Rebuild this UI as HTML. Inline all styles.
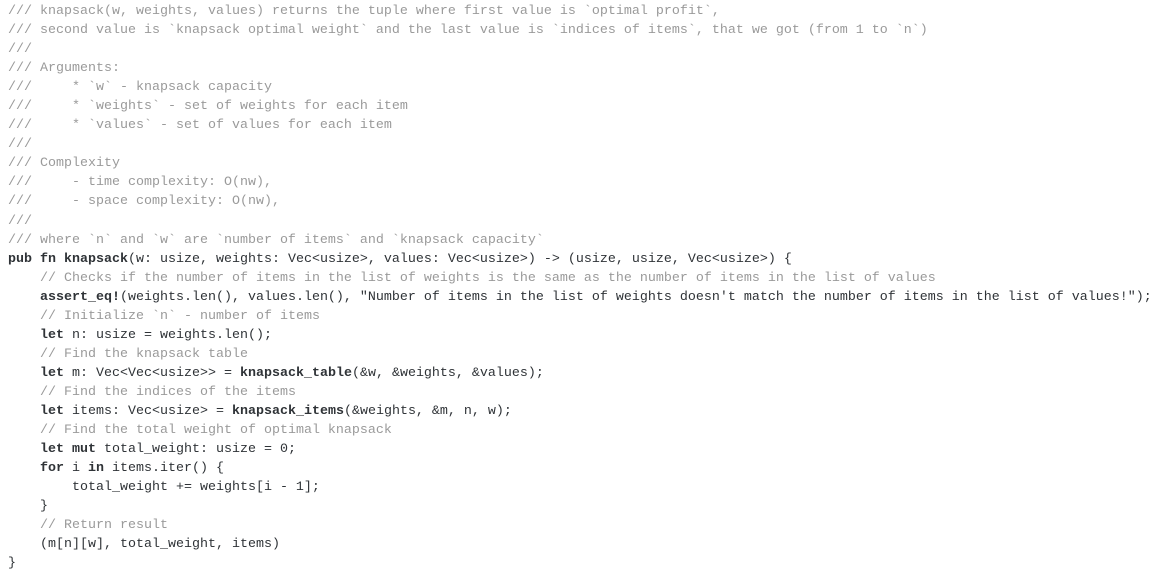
<!DOCTYPE html>
<html><head><meta charset="utf-8"><style>
html,body{margin:0;padding:0;background:#fff;width:1156px;height:575px;overflow:hidden}
pre{margin:0;position:absolute;left:8px;top:2px;font-family:"Liberation Mono",monospace;font-size:13.33px;line-height:19.04px;color:#2f3337;white-space:pre}
.c{color:#9a9a9a}
b{font-weight:bold}
</style></head><body>
<pre><span class="c">/// knapsack(w, weights, values) returns the tuple where first value is `optimal profit`,
/// second value is `knapsack optimal weight` and the last value is `indices of items`, that we got (from 1 to `n`)
///
/// Arguments:
///     * `w` - knapsack capacity
///     * `weights` - set of weights for each item
///     * `values` - set of values for each item
///
/// Complexity
///     - time complexity: O(nw),
///     - space complexity: O(nw),
///
/// where `n` and `w` are `number of items` and `knapsack capacity`</span>
<b>pub fn knapsack</b>(w: usize, weights: Vec&lt;usize&gt;, values: Vec&lt;usize&gt;) -&gt; (usize, usize, Vec&lt;usize&gt;) {
    <span class="c">// Checks if the number of items in the list of weights is the same as the number of items in the list of values</span>
    <b>assert_eq!</b>(weights.len(), values.len(), "Number of items in the list of weights doesn't match the number of items in the list of values!");
    <span class="c">// Initialize `n` - number of items</span>
    <b>let</b> n: usize = weights.len();
    <span class="c">// Find the knapsack table</span>
    <b>let</b> m: Vec&lt;Vec&lt;usize&gt;&gt; = <b>knapsack_table</b>(&amp;w, &amp;weights, &amp;values);
    <span class="c">// Find the indices of the items</span>
    <b>let</b> items: Vec&lt;usize&gt; = <b>knapsack_items</b>(&amp;weights, &amp;m, n, w);
    <span class="c">// Find the total weight of optimal knapsack</span>
    <b>let mut</b> total_weight: usize = 0;
    <b>for</b> i <b>in</b> items.iter() {
        total_weight += weights[i - 1];
    }
    <span class="c">// Return result</span>
    (m[n][w], total_weight, items)
}</pre>
</body></html>
